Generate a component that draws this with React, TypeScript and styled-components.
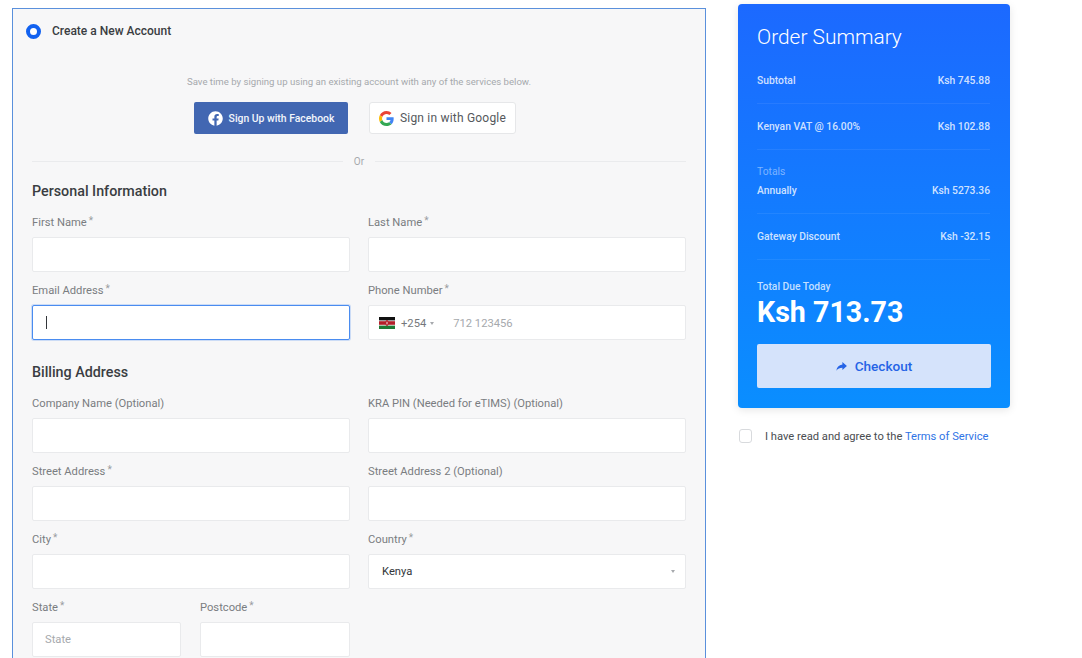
import * as React from 'react';
import styled, { createGlobalStyle } from 'styled-components';
import { FaFacebook } from 'react-icons/fa';

// ----------------------------------------
// styles
// ----------------------------------------

const GlobalStyle = createGlobalStyle`
  html, body {
    margin: 0;
    height: 658px;
    overflow: hidden;
    background: #fff;
    font-family: Roboto, "Liberation Sans", sans-serif;
  }
  * { box-sizing: border-box; }
`;

const Page = styled.div`
  display: flex;
  align-items: flex-start;
  gap: 32px;
  padding-left: 12px;
  height: 658px;
  overflow: hidden;
`;

const Panel = styled.section`
  flex: none;
  width: 694px;
  margin-top: 8px;
  padding: 0 19px 40px;
  background: #f7f7f8;
  border: 1px solid #5a90dc;
  border-bottom: none;
`;

const PanelHeader = styled.label`
  display: flex;
  align-items: center;
  gap: 11px;
  height: 44px;
  margin-left: -6px;
  font-size: 12px;
  font-weight: 500;
  color: #3a3d42;
`;

const Radio = styled.span`
  width: 15px;
  height: 15px;
  border-radius: 50%;
  border: 4px solid #1262f0;
  background: #fff;
`;

const Intro = styled.p`
  margin: 22px 0 0;
  font-size: 9.6px;
  line-height: 13px;
  text-align: center;
  color: #a6a9ad;
`;

const SocialRow = styled.div`
  display: flex;
  align-items: center;
  margin: 14px 0 0 162px;
  gap: 21px;
`;

const FacebookButton = styled.button`
  display: flex;
  align-items: center;
  justify-content: center;
  gap: 6px;
  width: 154px;
  height: 32px;
  border: none;
  border-radius: 2px;
  background: #4267b2;
  color: #f2f5fb;
  font: 500 10.4px Roboto, sans-serif;
`;

const GoogleButton = styled.button`
  display: flex;
  align-items: center;
  justify-content: center;
  gap: 6px;
  width: 147px;
  height: 32px;
  border: 1px solid #e6e7e9;
  border-radius: 3px;
  background: #fff;
  color: #55585c;
  font: 400 12px Roboto, sans-serif;
  letter-spacing: 0.2px;
`;

const Divider = styled.div`
  display: flex;
  align-items: center;
  gap: 11px;
  height: 14px;
  margin-top: 20px;
  font-size: 10px;
  color: #a6a9ad;

  &::before,
  &::after {
    content: '';
    flex: 1;
    height: 1px;
    background: #eaebed;
  }
`;

const SectionTitle = styled.h3<{ $top: number }>`
  margin: ${(p) => p.$top}px 0 13px;
  font-size: 14.3px;
  font-weight: 500;
  line-height: 20px;
  color: #3a3d42;
`;

const FormGrid = styled.div`
  display: grid;
  grid-template-columns: 318px 318px;
  column-gap: 18px;
  row-gap: 10px;
`;

const SplitField = styled.div`
  display: grid;
  grid-template-columns: 149px 150px;
  column-gap: 19px;
`;

const Field = styled.div`
  display: flex;
  flex-direction: column;
  min-width: 0;
`;

const Label = styled.label`
  height: 16px;
  margin-bottom: 7px;
  font-size: 11.2px;
  line-height: 18px;
  color: #7a7d81;
  white-space: nowrap;

  sup {
    margin-left: 2px;
    font-size: 10px;
    line-height: 0;
    color: #9a9da1;
    vertical-align: 2px;
  }
`;

const boxStyles = `
  width: 100%;
  height: 35px;
  border: 1px solid #e9eaec;
  border-radius: 2px;
  background: #fff;
  font: 400 11.2px Roboto, sans-serif;
`;

const TextInput = styled.input`
  ${boxStyles}
  display: block;
  padding: 0 12px;
  color: #33363a;
  outline: none;

  &::placeholder {
    color: #a6a9ad;
    opacity: 1;
  }
`;

const FocusedBox = styled.div`
  ${boxStyles}
  display: flex;
  align-items: center;
  padding-left: 13px;
  border-color: #4a8cf0;
  box-shadow: 0 0 0 1px rgba(74, 140, 240, 0.25);
`;

const TextCaret = styled.span`
  width: 1px;
  height: 13px;
  background: #33363a;
`;

const PhoneBox = styled.div`
  ${boxStyles}
  display: flex;
  align-items: center;
  padding: 1px 0 0 10px;
  color: #74777b;
`;

const DialCode = styled.span`
  margin-left: 6px;
`;

const SmallCaret = styled.span<{ $gap?: number }>`
  width: 0;
  height: 0;
  margin-left: ${(p) => p.$gap ?? 0}px;
  border-left: 2.5px solid transparent;
  border-right: 2.5px solid transparent;
  border-top: 3px solid #a6a9ad;
`;

const PhonePlaceholder = styled.span`
  margin-left: 19px;
  color: #a6a9ad;
`;

const SelectBox = styled.div`
  ${boxStyles}
  display: flex;
  align-items: center;
  justify-content: space-between;
  padding: 0 10px 0 13px;
  color: #33363a;
`;

const Aside = styled.aside`
  flex: none;
  width: 272px;
  margin-top: 4px;
`;

const SummaryCard = styled.div`
  height: 404px;
  padding: 19px 20px 0 19px;
  border-radius: 4px;
  background: linear-gradient(180deg, #1c69ff 0%, #0a8eff 100%);
  box-shadow: 0 2px 8px rgba(0, 0, 0, 0.1);
  color: #fff;
`;

const SummaryTitle = styled.h2`
  margin: 0;
  font-size: 20.9px;
  font-weight: 300;
  line-height: 28px;
`;

const SummaryRows = styled.div`
  margin-top: 7px;
`;

const SummaryGroup = styled.div`
  display: flex;
  flex-direction: column;
  justify-content: flex-end;
  padding: 15px 0 14px;
  border-bottom: 1px solid rgba(255, 255, 255, 0.07);
`;

const GroupLabel = styled.div`
  margin: -1px 0 3px;
  font-size: 10.3px;
  line-height: 16px;
  color: rgba(255, 255, 255, 0.45);
`;

const SummaryRow = styled.div`
  display: flex;
  justify-content: space-between;
  font-size: 10.3px;
  font-weight: 500;
  line-height: 16px;
  color: rgba(255, 255, 255, 0.8);
`;

const DueLabel = styled.div`
  margin-top: 19px;
  font-size: 10.3px;
  font-weight: 500;
  line-height: 16px;
  color: rgba(255, 255, 255, 0.75);
`;

const DueAmount = styled.div`
  font-size: 28.6px;
  font-weight: 700;
  line-height: 34px;
`;

const CheckoutButton = styled.button`
  display: flex;
  align-items: center;
  justify-content: center;
  gap: 8px;
  width: 234px;
  height: 44px;
  margin-top: 15px;
  padding-right: 6px;
  border: none;
  border-radius: 2px;
  background: #d5e3fb;
  color: #2563e6;
  font: 500 13.6px Roboto, sans-serif;
`;

const TermsRow = styled.label`
  display: flex;
  align-items: center;
  gap: 13px;
  margin-top: 21px;
  padding-left: 1px;
  font-size: 11.2px;
  color: #4a4d51;
  white-space: nowrap;

  a {
    color: #2f74e6;
    text-decoration: none;
  }
`;

const Checkbox = styled.span`
  flex: none;
  width: 13px;
  height: 14px;
  border: 1px solid #d8dadd;
  border-radius: 3px;
  background: #fff;
`;

// ----------------------------------------
// icons
// ----------------------------------------

const GoogleLogo = () => (
  <svg width="15" height="15" viewBox="0 0 48 48">
    <path fill="#EA4335" d="M24 9.5c3.5 0 6.7 1.2 9.2 3.6l6.9-6.9C35.9 2.4 30.5 0 24 0 14.6 0 6.5 5.4 2.6 13.2l8 6.2C12.5 13.7 17.800 9.500 24 9.500z" />
    <path fill="#4285F4" d="M46.900 24.500c0-1.600-.1-3.100-.4-4.500H24v9h12.900c-.6 3-2.200 5.500-4.700 7.200l7.700 6c4.500-4.200 7-10.300 7-17.700z" />
    <path fill="#FBBC05" d="M10.600 28.600c-.5-1.400-.8-3-.8-4.600s.3-3.200.8-4.600l-8-6.200C.9 16.500 0 20.100 0 24s.9 7.500 2.600 10.800l8-6.200z" />
    <path fill="#34A853" d="M24 48c6.500 0 11.900-2.100 15.900-5.800l-7.700-6c-2.200 1.400-4.900 2.300-8.200 2.300-6.200 0-11.500-4.200-13.400-9.900l-8 6.200C6.500 42.600 14.600 48 24 48z" />
  </svg>
);

const KenyaFlag = () => (
  <svg width="16" height="12" viewBox="0 0 16 12">
    <rect width="16" height="12" fill="#fff" />
    <rect width="16" height="3.400" fill="#111" />
    <rect y="4.200" width="16" height="3.600" fill="#b3202a" />
    <rect y="8.600" width="16" height="3.400" fill="#1d7a35" />
    <ellipse cx="8" cy="6" rx="1.500" ry="3" fill="#b3202a" />
    <ellipse cx="8" cy="6" rx="0.500" ry="1.600" fill="#fff" />
  </svg>
);

// solid arrow used on the checkout button
const CheckoutArrow = () => (
  <svg width="11" height="9" viewBox="0 0 12 10" fill="currentColor">
    <path d="M7 0l5 4.500L7 9V6.300C4 6.300 2 7.200 0.300 9.600 0.800 6 3 3.200 7 2.800V0z" />
  </svg>
);

// ----------------------------------------
// component
// ----------------------------------------

const Req = () => <sup>*</sup>;

export default function App() {
  return (
    <>
      <GlobalStyle />
      <Page>
        <Panel>
          <PanelHeader>
            <Radio />
            Create a New Account
          </PanelHeader>

          <Intro>
            Save time by signing up using an existing account with any of the
            services below.
          </Intro>

          <SocialRow>
            <FacebookButton>
              <FaFacebook size={15} color="#fff" />
              Sign Up with Facebook
            </FacebookButton>
            <GoogleButton>
              <GoogleLogo />
              Sign in with Google
            </GoogleButton>
          </SocialRow>

          <Divider>Or</Divider>

          <SectionTitle $top={13}>Personal Information</SectionTitle>
          <FormGrid>
            <Field>
              <Label>First Name<Req /></Label>
              <TextInput />
            </Field>
            <Field>
              <Label>Last Name<Req /></Label>
              <TextInput />
            </Field>
            <Field>
              <Label>Email Address<Req /></Label>
              <FocusedBox>
                <TextCaret />
              </FocusedBox>
            </Field>
            <Field>
              <Label>Phone Number<Req /></Label>
              <PhoneBox>
                <KenyaFlag />
                <DialCode>+254</DialCode>
                <SmallCaret $gap={4} />
                <PhonePlaceholder>712 123456</PhonePlaceholder>
              </PhoneBox>
            </Field>
          </FormGrid>

          <SectionTitle $top={22}>Billing Address</SectionTitle>
          <FormGrid>
            <Field>
              <Label>Company Name (Optional)</Label>
              <TextInput />
            </Field>
            <Field>
              <Label>KRA PIN (Needed for eTIMS) (Optional)</Label>
              <TextInput />
            </Field>
            <Field>
              <Label>Street Address<Req /></Label>
              <TextInput />
            </Field>
            <Field>
              <Label>Street Address 2 (Optional)</Label>
              <TextInput />
            </Field>
            <Field>
              <Label>City<Req /></Label>
              <TextInput />
            </Field>
            <Field>
              <Label>Country<Req /></Label>
              <SelectBox>
                Kenya
                <SmallCaret />
              </SelectBox>
            </Field>
            <SplitField>
              <Field>
                <Label>State<Req /></Label>
                <TextInput placeholder="State" />
              </Field>
              <Field>
                <Label>Postcode<Req /></Label>
                <TextInput />
              </Field>
            </SplitField>
          </FormGrid>
        </Panel>

        <Aside>
          <SummaryCard>
            <SummaryTitle>Order Summary</SummaryTitle>
            <SummaryRows>
              <SummaryGroup>
                <SummaryRow>
                  <span>Subtotal</span>
                  <span>Ksh 745.88</span>
                </SummaryRow>
              </SummaryGroup>
              <SummaryGroup>
                <SummaryRow>
                  <span>Kenyan VAT @ 16.00%</span>
                  <span>Ksh 102.88</span>
                </SummaryRow>
              </SummaryGroup>
              <SummaryGroup>
                <GroupLabel>Totals</GroupLabel>
                <SummaryRow>
                  <span>Annually</span>
                  <span>Ksh 5273.36</span>
                </SummaryRow>
              </SummaryGroup>
              <SummaryGroup>
                <SummaryRow>
                  <span>Gateway Discount</span>
                  <span>Ksh -32.15</span>
                </SummaryRow>
              </SummaryGroup>
            </SummaryRows>
            <DueLabel>Total Due Today</DueLabel>
            <DueAmount>Ksh 713.73</DueAmount>
            <CheckoutButton>
              <CheckoutArrow />
              Checkout
            </CheckoutButton>
          </SummaryCard>

          <TermsRow>
            <Checkbox />
            <span>
              I have read and agree to the <a href="#terms">Terms of Service</a>
            </span>
          </TermsRow>
        </Aside>
      </Page>
    </>
  );
}
